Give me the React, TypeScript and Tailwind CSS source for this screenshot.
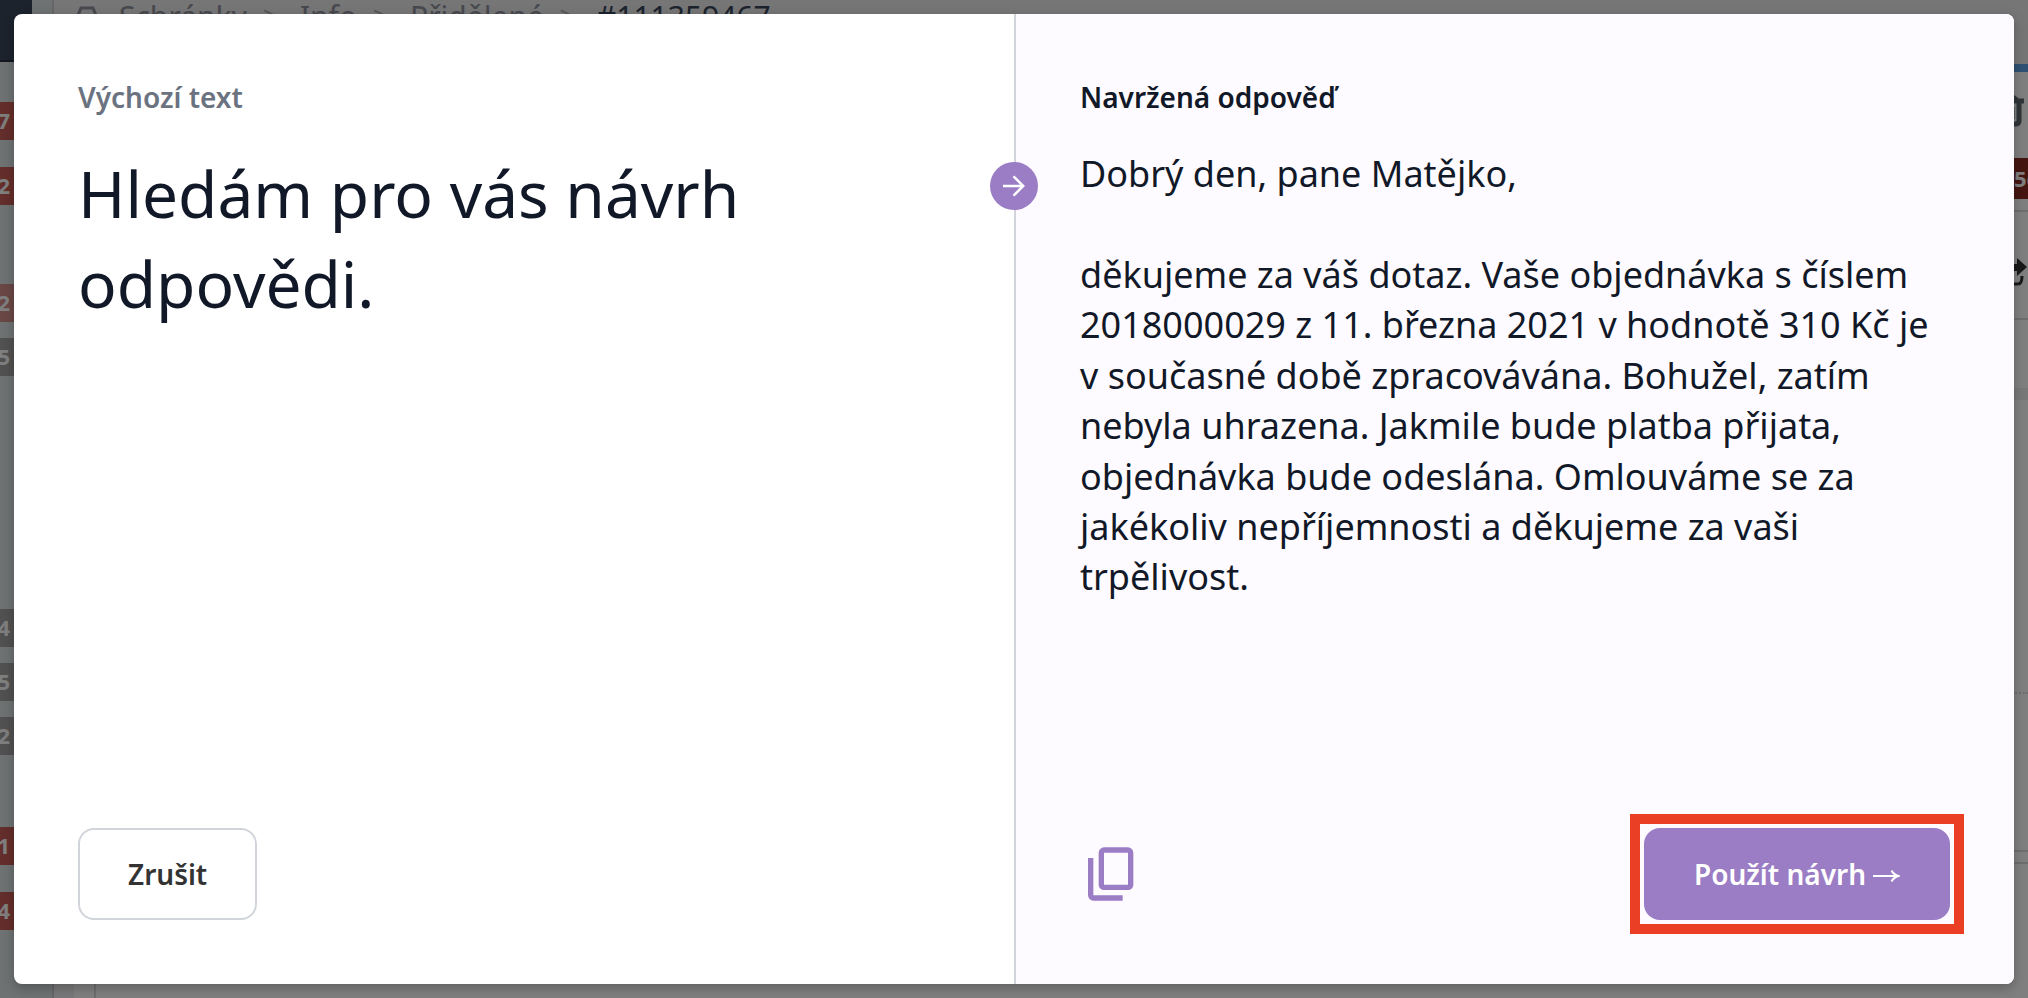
interface BadgeProps {
  value: string;
  className: string;
}

const Badge = ({ value, className }: BadgeProps) => (
  <span
    className={`flex h-[38px] w-10 shrink-0 items-center pr-[30px] pb-0.5 text-[22px] font-bold text-white justify-end ${className}`}
  >
    {value}
  </span>
);

const CopyIcon = () => (
  <svg viewBox="0 0 24 24" className="h-16 w-16" fill="currentColor" aria-hidden="true">
    <path d="M9 18q-.825 0-1.412-.587T7 16V4q0-.825.588-1.412T9 2h9q.825 0 1.413.588T20 4v12q0 .825-.587 1.413T18 18zm0-2h9V4H9zm-4 6q-.825 0-1.412-.587T3 20V6h2v14h11v2z" />
  </svg>
);

const Sidebar = () => (
  <aside className="flex w-[54px] shrink-0 flex-col border-r-2 border-[#cbcfcf] bg-[#dde5e5]">
    <div className="h-[62px] w-8 shrink-0 border-b-2 border-[#28303c] bg-[#38475a]" />
    <Badge value="7" className="mt-10 bg-[#c95c56]" />
    <Badge value="2" className="mt-[27px] bg-[#c95c56]" />
    <Badge value="2" className="mt-[79px] bg-[#d58f8a]" />
    <Badge value="5" className="mt-4 bg-[#a2a2a2]" />
    <Badge value="4" className="mt-[233px] bg-[#a2a2a2]" />
    <Badge value="5" className="mt-4 bg-[#a2a2a2]" />
    <Badge value="2" className="mt-4 bg-[#a2a2a2]" />
    <Badge value="1" className="mt-[72px] bg-[#c95c56]" />
    <Badge value="4" className="mt-[27px] bg-[#c95c56]" />
  </aside>
);

const Separator = () => (
  <span className="w-[53px] pl-4 text-[26px] leading-[30px] text-[#aaaaaa]">&gt;</span>
);

const Breadcrumb = () => (
  <nav className="flex h-16 items-start bg-[#ececee] pl-[21px] text-[30px] leading-[34px] text-[#8e939d]">
    <svg viewBox="0 0 24 24" className="mt-[6px] mr-5 h-6 w-6" fill="none" stroke="currentColor" strokeWidth="3" aria-hidden="true">
      <path d="M2 12 6 2h12l4 10v9H2z" />
    </svg>
    <a href="#schranky">Schránky</a>
    <Separator />
    <a href="#info">Info</a>
    <Separator />
    <a href="#pridelene">Přidělené</a>
    <Separator />
    <span className="text-[#38475a]">#111359467</span>
  </nav>
);

const Toolbar = () => (
  <div className="flex w-20 shrink-0 flex-col bg-white">
    <div className="h-16 shrink-0 bg-[#ececee]" />
    <div className="h-2 shrink-0 bg-[#5fa3e6]" />
    <svg viewBox="0 0 32 32" className="mt-[23px] ml-11 h-8 w-8 shrink-0" fill="none" stroke="#606a70" strokeWidth="5" aria-hidden="true">
      <path d="M0 6h32M10 5l3-4h6l6 4M5 6v20q0 3 4 3h14q4 0 4-3V6M12 12v12M20 12v12" />
    </svg>
    <div className="mt-[31px] flex h-[41px] shrink-0 items-center bg-[#8a2a22] pl-[66px] text-[22px] font-bold text-white">
      5c
    </div>
    <div className="mt-[11px] h-0.5 shrink-0 bg-[#dddddd]" />
    <svg viewBox="0 0 32 32" className="mt-[46px] ml-[47px] h-8 w-8 shrink-0" aria-hidden="true">
      <path d="M0 6h22V0l10 9-10 9v-5H0z" fill="#323232" />
      <path d="M4 20v6h19q4 0 4-8" fill="none" stroke="#323232" strokeWidth="3" />
    </svg>
    <div className="mt-7 h-0.5 shrink-0 bg-[#dddddd]" />
    <div className="mt-[68px] h-3 shrink-0 bg-[#f0f0f0]" />
    <div className="mt-[292px] shrink-0 border-t-2 border-dotted border-[#dddddd]" />
    <div className="mt-[156px] h-[14px] shrink-0 border-y-2 border-[#dddddd]" />
  </div>
);

const App = () => {
  return (
    <div className="relative h-screen overflow-hidden bg-white font-['Noto_Sans',sans-serif]">
      <div className="flex h-full" inert>
        <Sidebar />
        <div className="flex min-w-0 flex-1 flex-col">
          <Breadcrumb />
          <div className="flex flex-1">
            <div className="w-5 bg-[#f0f0f4]" />
            <div className="w-[22px] border-r-2 border-[#dddddd]" />
          </div>
        </div>
        <Toolbar />
      </div>

      {/* Suggested reply dialog */}
      <div className="absolute inset-0 flex bg-black/50 p-[14px]">
        <div
          role="dialog"
          aria-modal="true"
          className="grid flex-1 grid-cols-2 rounded-lg bg-white shadow-[0_4px_12px_rgba(0,0,0,0.25)]"
        >
          <section className="flex flex-col p-16 text-[#111827]">
            <h2 className="text-[28px] leading-[1.4] font-semibold text-[#6b7280]">Výchozí text</h2>
            <p className="mt-8 text-[64px] leading-[1.4]">Hledám pro vás návrh odpovědi.</p>
            <div className="mt-auto flex">
              <button
                type="button"
                className="h-[92px] rounded-2xl border-2 border-[#d1d5db] bg-white px-12 text-[28px] font-semibold text-[#333333]"
              >
                Zrušit
              </button>
            </div>
          </section>

          <section className="relative flex flex-col rounded-r-lg border-l-2 border-[#d1d5db] bg-[#fdfbff] p-16 text-[#111827]">
            <span className="absolute top-[148px] -left-[26px] flex h-12 w-12 items-center justify-center rounded-full bg-[#9b7dc5] text-white">
              <svg viewBox="0 0 24 24" className="h-6 w-6" fill="none" stroke="currentColor" strokeWidth="2.500" aria-hidden="true">
                <path d="M1 12h20.500M11.500 2.300 21.200 12l-9.700 9.700" />
              </svg>
            </span>

            <h2 className="text-[28px] leading-[1.4] font-semibold">Navržená odpověď</h2>
            <div className="mt-8 text-[36px] leading-[1.4]">
              <p>Dobrý den, pane Matějko,</p>
              <br />
              <p>
                děkujeme za váš dotaz. Vaše objednávka s číslem 2018000029 z 11. března 2021 v hodnotě
                310 Kč je v současné době zpracovávána. Bohužel, zatím nebyla uhrazena. Jakmile bude
                platba přijata, objednávka bude odeslána. Omlouváme se za jakékoliv nepříjemnosti a
                děkujeme za vaši trpělivost.
              </p>
            </div>

            <div className="mt-auto flex items-center justify-between">
              <button type="button" aria-label="Kopírovat" className="text-[#9b7dc5]">
                <CopyIcon />
              </button>
              <div className="relative">
                <button
                  type="button"
                  className="flex h-[92px] items-center gap-1.5 rounded-2xl bg-[#9b7dc5] px-[50px] text-[28px] font-semibold text-white"
                >
                  Použít návrh
                  <svg viewBox="0 0 28 28" className="h-7 w-7" fill="none" stroke="currentColor" strokeWidth="2" aria-hidden="true">
                    <path d="M1 16h25M19.500 10.500q2 4 7 5.500-5 1.500-7 5.500" />
                  </svg>
                </button>
                <span className="pointer-events-none absolute -inset-[14px] border-[10px] border-[#ea3f25]" />
              </div>
            </div>
          </section>
        </div>
      </div>
    </div>
  );
};

export default App;
